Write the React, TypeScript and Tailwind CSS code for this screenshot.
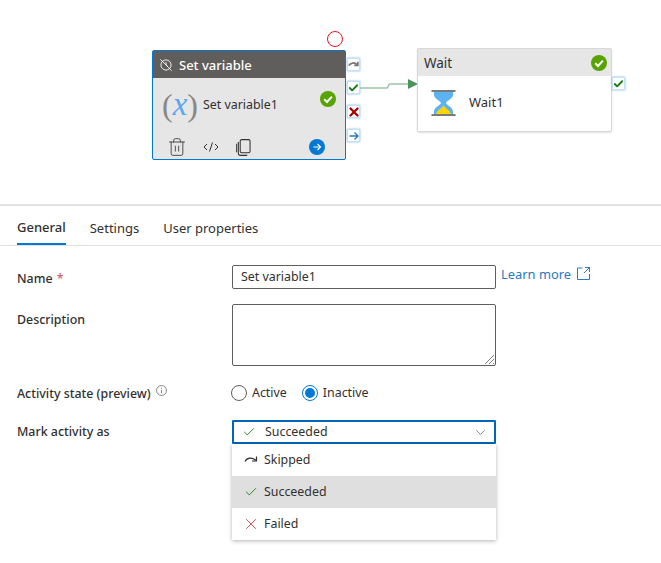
import { Check, ChevronDown, Trash2, X } from 'lucide-react';

const font = { fontFamily: '"Noto Sans", "Open Sans", sans-serif' };

function GreenTick({ className }: { className: string }) {
  return (
    <svg viewBox="0 0 16 16" className={className}>
      <circle cx="8" cy="8" r="8" fill="#57a300" />
      <path d="M4.2 8.3 7 11l4.9-5.4" fill="none" stroke="#fff" strokeWidth="2" />
    </svg>
  );
}

function SkipIcon({ className, color = '#323130', weight = 1.2 }: { className: string; color?: string; weight?: number }) {
  return (
    <svg viewBox="0 0 14 10" className={className} fill="none" stroke={color} strokeWidth={weight}>
      <path d="M1 6.5C3 2.5 8 1.8 12 5.5" />
      <path d="M12.5 1.5v4.5H8" />
    </svg>
  );
}

function Handle({ top, left, children }: { top: number; left: number; children: React.ReactNode }) {
  return (
    <div
      className="absolute w-[13px] h-[13px] bg-white border border-[#c7e0f4] shadow-[0_0_2px_#6cb8f6] flex items-center justify-center"
      style={{ top, left }}
    >
      {children}
    </div>
  );
}

function Canvas() {
  return (
    <div className="relative h-[204px]">
      <div className="absolute left-[327px] top-[31px] w-4 h-4 rounded-full border border-[#e81123]" />

      {/* selected activity */}
      <div className="absolute left-[152px] top-[50px] w-[194px] h-[110px] border border-[#0078d4] rounded-[2px] bg-[#e6e6e6] flex flex-col">
        <div className="h-[27px] bg-[#605e5c] flex items-center pl-[6px] gap-[6px] text-white text-[13px] font-medium">
          <svg viewBox="0 0 16 16" className="w-[14px] h-[14px]" fill="none" stroke="#fff" strokeWidth="1">
            <circle cx="8" cy="8" r="5.8" />
            <path d="M1.5 1.5l13 13" />
            <path d="M8 4.5V8l2 1.5" />
          </svg>
          <span className="pt-[2px]">Set variable</span>
        </div>
        <div className="flex items-center h-[53px] pl-[9px] pr-[9px]">
          <div className="w-[32px] flex items-center justify-between" style={{ fontFamily: '"Liberation Serif", serif' }}>
            <span className="text-[32px] leading-none text-[#8a8886]">(</span>
            <span className="text-[33px] leading-none italic text-[#5ba7f0]">x</span>
            <span className="text-[32px] leading-none text-[#8a8886]">)</span>
          </div>
          <span className="ml-[9px] pt-[2px] text-[12.400px] text-[#323130]">Set variable1</span>
          <GreenTick className="w-4 h-4 ml-auto mb-[11px]" />
        </div>
        <div className="flex items-center mt-[6px] pl-[14px] pr-[20px] text-[#323130]">
          <Trash2 className="w-[20px] h-[20px]" strokeWidth={1} />
          <svg viewBox="0 0 16 12" className="w-[16px] h-[12px] ml-[16px]" fill="none" stroke="#323130" strokeWidth="1">
            <path d="M4 3 1 6l3 3M12 3l3 3-3 3M9.500 1.500 6.500 10.500" />
          </svg>
          <svg viewBox="0 0 16 18" className="w-[15px] h-[17px] ml-[17px]" fill="none" stroke="#323130" strokeWidth="1.1">
            <rect x="4.500" y="0.600" width="10.500" height="14" rx="1.500" />
            <path d="M2.500 3v12c0 1.500 1 2.400 2.400 2.400h7" />
            <path d="M.7 5v9" />
          </svg>
          <div className="ml-auto w-4 h-4 rounded-full bg-[#0078d4] flex items-center justify-center">
            <svg viewBox="0 0 10 10" className="w-[10px] h-[10px]" fill="none" stroke="#fff" strokeWidth="1.2">
              <path d="M1.500 5h7M5.500 2l3 3-3 3" />
            </svg>
          </div>
        </div>
      </div>

      <Handle top={58} left={347}>
        <SkipIcon className="w-[12px] h-[9px]" color="#797775" weight={2.2} />
      </Handle>
      <Handle top={81} left={347}>
        <Check className="w-[12px] h-[12px] text-[#107c10]" strokeWidth={4} />
      </Handle>
      <Handle top={105} left={347}>
        <X className="w-[14px] h-[14px] shrink-0 text-[#a80000]" strokeWidth={4} />
      </Handle>
      <Handle top={129} left={347}>
        <svg viewBox="0 0 10 10" className="w-[10px] h-[10px]" fill="none" stroke="#2b79c2" strokeWidth="1.4">
          <path d="M0.500 5h8M5.500 1.500 9 5 5.500 8.500" />
        </svg>
      </Handle>

      {/* connector */}
      <svg className="absolute left-[360px] top-[76px] w-[58px] h-[16px]" viewBox="0 0 58 16" fill="none">
        <path d="M0 12h27c1.500 0 1-4 3-4h20" stroke="#9cc3a8" strokeWidth="1.500" />
        <path d="M48 3l10 5-10 5z" fill="#4b9460" />
      </svg>

      {/* wait activity */}
      <div className="absolute left-[417px] top-[48px] w-[195px] h-[84px] border border-[#d8d8d8] rounded-[2px] bg-white shadow-[0_1px_2px_rgba(0,0,0,0.12)] flex flex-col">
        <div className="h-[27px] bg-[#e6e6e6] flex items-center justify-between pl-[6px] pr-[4px] text-[13.500px] text-[#323130]">
          <span className="pt-[2px]">Wait</span>
          <GreenTick className="w-4 h-4" />
        </div>
        <div className="flex-1 flex items-center pl-[13px] gap-[13px] pb-[1px]">
          <svg viewBox="0 0 26 28" className="w-[25px] h-[28px]">
            <path d="M3 2h20v3c0 5-6 6-7.500 9C17 17 23 18 23 24v2H3v-2c0-6 6-7 7.500-10C9 11 3 10 3 5z" fill="#5db2f0" />
            <path d="M5.500 25.500c0-4 6-6 7.500-9 1.500 3 7.500 5 7.500 9z" fill="#ffd400" />
            <rect x="0.500" y="0.500" width="25" height="2" fill="#797775" />
            <rect x="0.500" y="25.500" width="25" height="2" fill="#797775" />
          </svg>
          <span className="text-[13px] text-[#323130]">Wait1</span>
        </div>
      </div>
      <Handle top={77} left={612}>
        <Check className="w-[12px] h-[12px] text-[#107c10]" strokeWidth={4} />
      </Handle>
    </div>
  );
}

function Tabs() {
  return (
    <div className="h-[42px] border-t-2 border-[#e1e1e1] border-b border-b-[#e1e1e1] flex pl-[17px] gap-[24px] text-[13px] text-[#323130]">
      <div className="h-[39px] pt-[6px] flex items-center border-b-2 border-[#0078d4] font-medium">General</div>
      <div className="h-[39px] pt-[6px] flex items-center">Settings</div>
      <div className="h-[39px] pt-[6px] flex items-center">User properties</div>
    </div>
  );
}

function MenuItem({ icon, label, selected }: { icon: React.ReactNode; label: string; selected?: boolean }) {
  return (
    <div className={`h-[32px] flex items-center pl-[11px] gap-[6px] text-[12.400px] text-[#323130] ${selected ? 'bg-[#dfdfdf]' : ''}`}>
      <span className="w-[15px] flex justify-center">{icon}</span>
      {label}
    </div>
  );
}

function Form() {
  return (
    <div className="pl-[17px] pt-[19px] text-[12.400px] text-[#323130]">
      <div className="flex">
        <div className="w-[215px] pt-[5px] font-medium">
          Name <span className="ml-[1px] font-normal text-[#c8506a]">*</span>
        </div>
        <div className="w-[264px] h-[24px] border border-[#605e5c] rounded-[2px] flex items-center pl-[8px]">Set variable1</div>
        <a className="ml-[5px] text-[#2b79c2] text-[12.900px] flex items-start gap-[6px] h-[20px]">
          Learn more
          <svg viewBox="0 0 13 13" className="w-[13px] h-[13px] mt-[2px]" fill="none" stroke="#2b79c2" strokeWidth="1">
            <path d="M5.500 1H.5v11.500H12.500V7M8 .5h4.500V5M12.500 .5 7 6" />
          </svg>
        </a>
      </div>

      <div className="flex mt-[15px]">
        <div className="w-[215px] pt-[7px] font-medium">Description</div>
        <div className="relative w-[264px] h-[62px] border border-[#605e5c] rounded-[2px]">
          <svg viewBox="0 0 9 9" className="absolute right-[1px] bottom-[1px] w-[9px] h-[9px]" stroke="#605e5c" strokeWidth="0.8">
            <path d="M0 9 9 0M4 9l5-5M8 9l1-1" />
          </svg>
        </div>
      </div>

      <div className="flex items-center mt-[17px] h-[20px]">
        <div className="w-[214px] flex font-medium pt-[2px]">
          Activity state (preview)
          <svg viewBox="0 0 12 12" className="w-[11px] h-[11px] ml-[5px]" fill="none" stroke="#605e5c" strokeWidth="0.8">
            <circle cx="6" cy="6" r="5.400" />
            <path d="M6 5.200v3.800M6 3v1.100" />
          </svg>
        </div>
        <div className="w-4 h-4 rounded-full border border-[#605e5c]" />
        <span className="ml-[5px]">Active</span>
        <div className="ml-[15px] w-4 h-4 rounded-full border border-[#0078d4] flex items-center justify-center">
          <div className="w-[10px] h-[10px] rounded-full bg-[#0078d4]" />
        </div>
        <span className="ml-[5px]">Inactive</span>
      </div>

      <div className="flex mt-[17px]">
        <div className="w-[215px] pt-[3px] font-medium">Mark activity as</div>
        <div className="relative w-[264px]">
          <div className="h-[24px] border-2 border-[#0067b8] rounded-[1px] flex items-center pl-[8px] pr-[6px]">
            <Check className="w-[14px] h-[14px] text-[#107c10]" strokeWidth={1.5} />
            <span className="ml-[9px]">Succeeded</span>
            <ChevronDown className="w-[15px] h-[15px] ml-auto text-[#605e5c]" strokeWidth={1.2} />
          </div>
          <div className="absolute left-0 right-0 top-[24px] bg-white shadow-[0_1px_4px_rgba(0,0,0,0.3)]">
            <MenuItem icon={<SkipIcon className="w-[14px] h-[10px]" />} label="Skipped" />
            <MenuItem icon={<Check className="w-[14px] h-[14px] text-[#107c10]" strokeWidth={1.5} />} label="Succeeded" selected />
            <MenuItem icon={<X className="w-[18px] h-[18px] shrink-0 text-[#d13438]" strokeWidth={1.1} />} label="Failed" />
          </div>
        </div>
      </div>
    </div>
  );
}

export default function App() {
  return (
    <div className="w-[661px] h-[563px] bg-white overflow-hidden" style={font}>
      <Canvas />
      <Tabs />
      <Form />
    </div>
  );
}
